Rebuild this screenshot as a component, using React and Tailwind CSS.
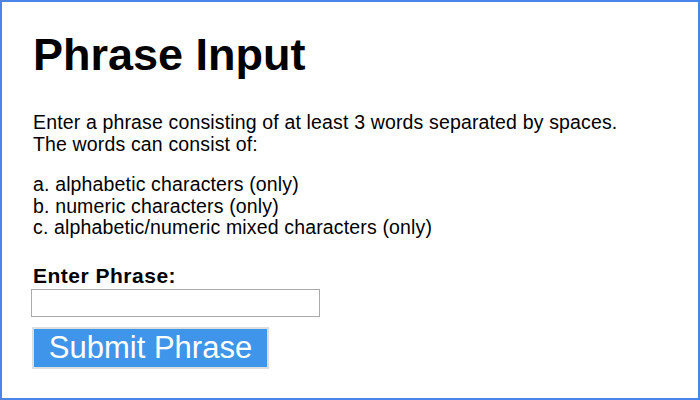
import React from "react";

const App = () => {
    return (
        <div className="w-[700px] h-[400px] box-border border-2 border-[#4a86e8] bg-white pl-[31px] pt-[27px] text-black font-['Liberation_Sans',Arial,sans-serif]">
            <h1 className="text-[45px] leading-[52px] font-bold">Phrase Input</h1>
            <p className="mt-[31px] text-[19.5px] leading-[21.5px] tracking-[0.15px]">
                Enter a phrase consisting of at least 3 words separated by spaces.
                <br />
                The words can consist of:
            </p>
            <div className="mt-[19px] text-[19.5px] leading-[21.5px] tracking-[0.15px]">
                <div>a. alphabetic characters (only)</div>
                <div>b. numeric characters (only)</div>
                <div>c. alphabetic/numeric mixed characters (only)</div>
            </div>
            <label className="block mt-[25px] text-[21px] leading-[24px] font-bold tracking-[0.5px]">Enter Phrase:</label>
            <input
                type="text"
                className="block mt-[1px] -ml-[2px] w-[289px] h-[28px] border border-[#aaaaaa] bg-white outline-none"
            />
            <button className="block mt-[10px] -ml-[1px] w-[237px] h-[42px] border-2 border-[#dedede] bg-[#3f95ea] text-white text-[31px] leading-none">
                Submit Phrase
            </button>
        </div>
    );
};

export default App;
